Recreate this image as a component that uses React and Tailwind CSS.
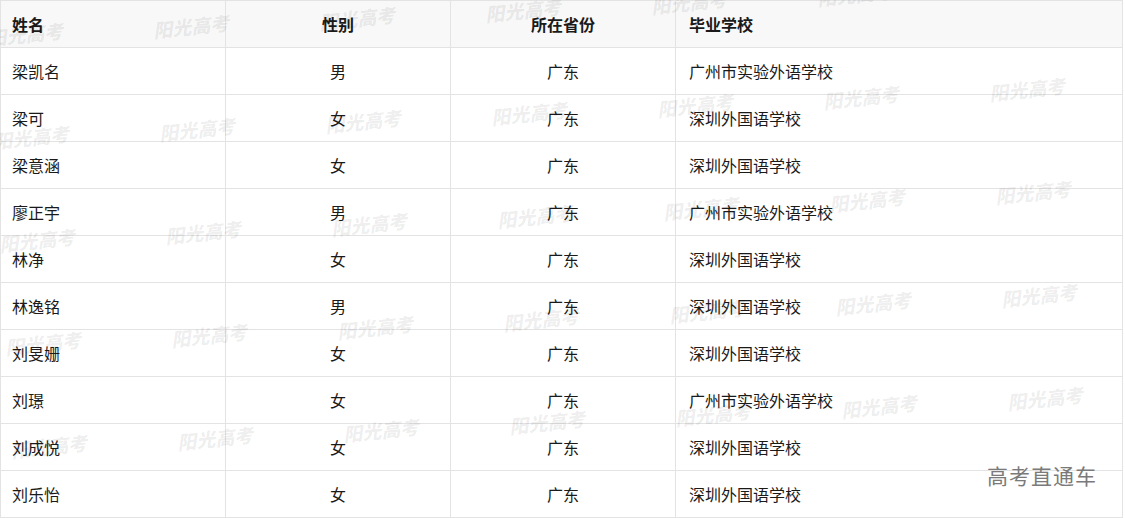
import React from "react";

const rows = [
  ["梁凯名", "男", "广东", "广州市实验外语学校"],
  ["梁可", "女", "广东", "深圳外国语学校"],
  ["梁意涵", "女", "广东", "深圳外国语学校"],
  ["廖正宇", "男", "广东", "广州市实验外语学校"],
  ["林净", "女", "广东", "深圳外国语学校"],
  ["林逸铭", "男", "广东", "深圳外国语学校"],
  ["刘旻姗", "女", "广东", "深圳外国语学校"],
  ["刘璟", "女", "广东", "广州市实验外语学校"],
  ["刘成悦", "女", "广东", "深圳外国语学校"],
  ["刘乐怡", "女", "广东", "深圳外国语学校"],
];

// watermark grid: each row shifts a little right, each column climbs a little
const marks = [];
for (let k = -1; k <= 3; k++) {
  for (let j = -4; j <= 2; j++) {
    marks.push({ x: 657 + 166 * j + 6 * k, y: 95 - 8 * j + 103 * k });
  }
}

const Cell = ({ children, className = "" }) => (
  <div className={`flex items-center border-r border-b border-[#e3e3e3] ${className}`}>
    {children}
  </div>
);

export default function App() {
  return (
    <div className="relative w-[1125px] h-[518px] overflow-hidden bg-white font-['Noto_Sans_CJK_SC',sans-serif] text-[16px] text-[#1a1a1a]">
      <div className="w-[1123px] border-l border-t border-[#e3e3e3]">
        <div className="grid grid-cols-[225px_225px_225px_447px] h-[47px] bg-[#f8f8f8] font-bold">
          <Cell className="pl-[11px]">姓名</Cell>
          <Cell className="justify-center">性别</Cell>
          <Cell className="justify-center">所在省份</Cell>
          <Cell className="pl-[13px]">毕业学校</Cell>
        </div>
        {rows.map((r, i) => (
          <div key={i} className="grid grid-cols-[225px_225px_225px_447px] h-[47px]">
            <Cell className="pl-[11px]">{r[0]}</Cell>
            <Cell className="justify-center">{r[1]}</Cell>
            <Cell className="justify-center">{r[2]}</Cell>
            <Cell className="pl-[13px]">{r[3]}</Cell>
          </div>
        ))}
      </div>

      <div className="pointer-events-none absolute inset-0">
        {marks.map((m, i) => (
          <span
            key={i}
            className="absolute whitespace-nowrap text-[19px] font-black italic leading-none text-black/[0.07] -rotate-6 font-['Noto_Sans_CJK_SC',sans-serif]"
            style={{ left: m.x, top: m.y }}
          >
            阳光高考
          </span>
        ))}
      </div>

      <div className="absolute left-[987px] top-[465px] text-[21px] leading-none tracking-[1px] text-[#7a7a7a]">
        高考直通车
      </div>
    </div>
  );
}
